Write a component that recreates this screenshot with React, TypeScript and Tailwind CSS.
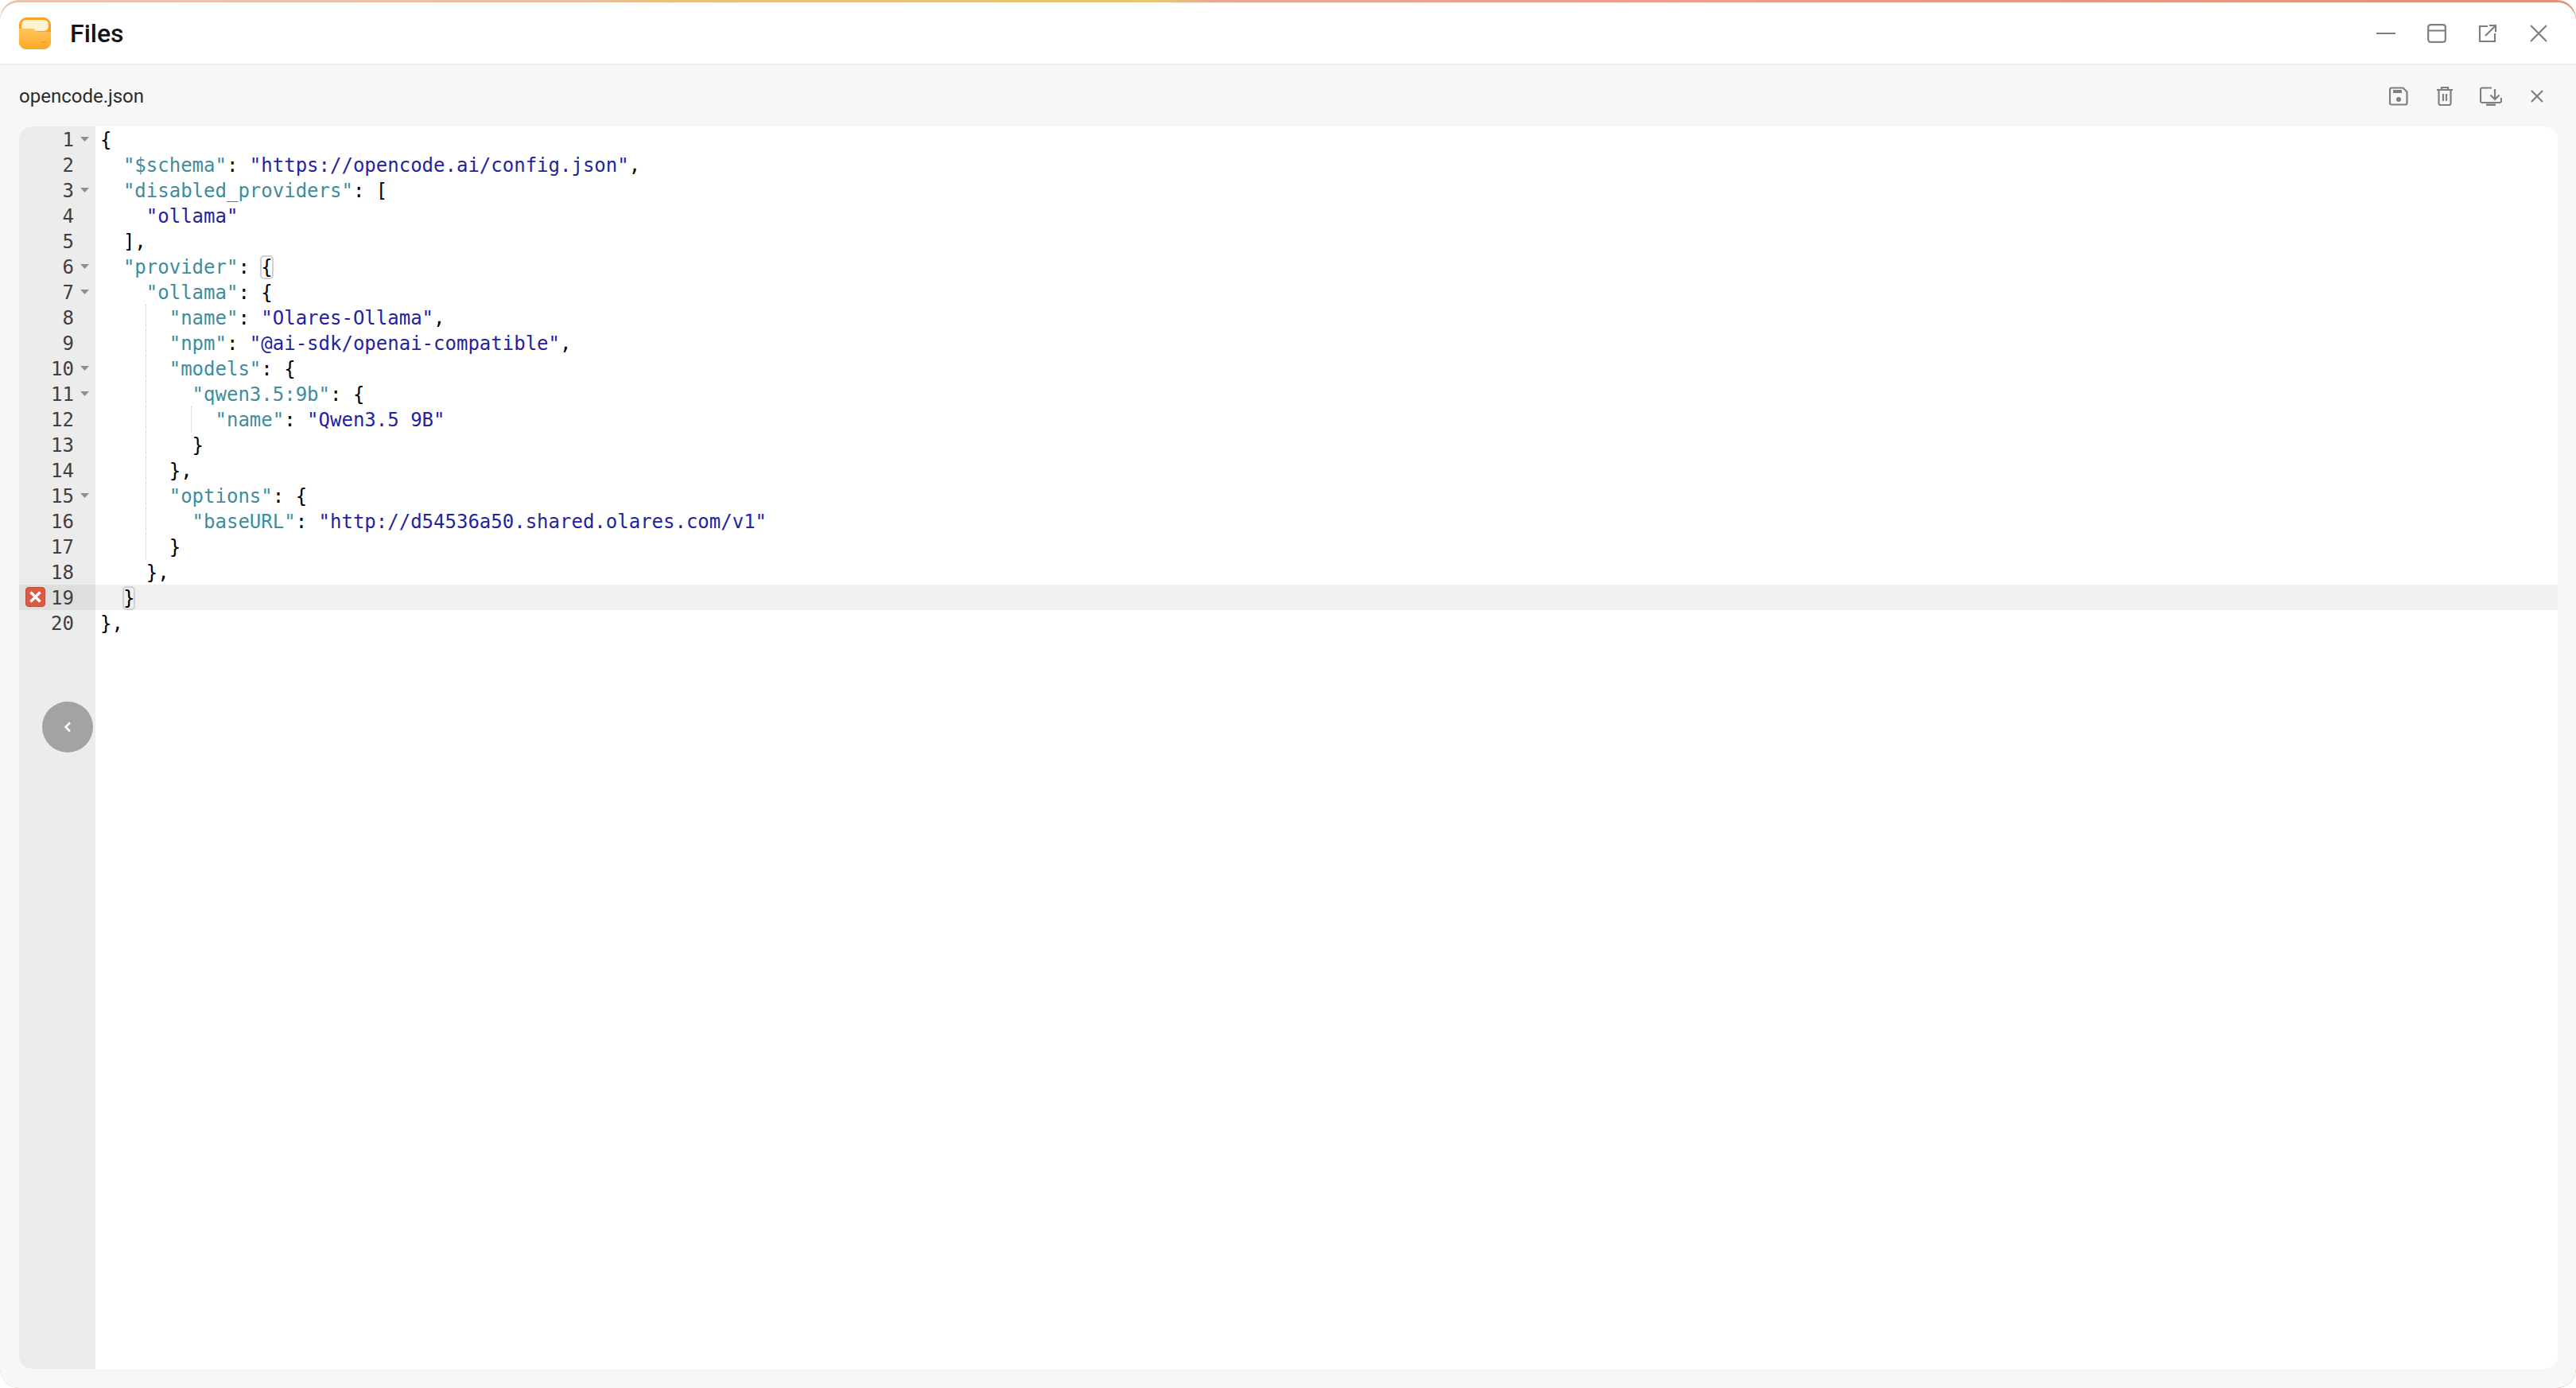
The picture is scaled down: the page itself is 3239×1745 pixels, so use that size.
const source = `{
  "$schema": "https://opencode.ai/config.json",
  "disabled_providers": [
    "ollama"
  ],
  "provider": {
    "ollama": {
      "name": "Olares-Ollama",
      "npm": "@ai-sdk/openai-compatible",
      "models": {
        "qwen3.5:9b": {
          "name": "Qwen3.5 9B"
        }
      },
      "options": {
        "baseURL": "http://d54536a50.shared.olares.com/v1"
      }
    },
  }
},`.split("\n");

const foldable = [1, 3, 6, 7, 10, 11, 15];
const activeLine = 19;

// tiny json highlighter, keys teal and values blue
const Tokens = ({ text }: { text: string }) => {
  const parts = text.split(/("[^"]*")/);
  return (
    <>
      {parts.map((part, i) => {
        if (!part.startsWith('"')) return <span key={i}>{part}</span>;
        const isKey = parts[i + 1]?.startsWith(":");
        return (
          <span key={i} className={isKey ? "text-[#3f8c9c]" : "text-[#23239f]"}>
            {part}
          </span>
        );
      })}
    </>
  );
};

const CodeLine = ({ text, no }: { text: string; no: number }) => {
  const guideOuter = no >= 8 && no <= 17;
  const guideInner = no === 12;
  const bracket = no === 6 ? text.indexOf("{") : no === 19 ? text.indexOf("}") : -1;
  return (
    <div className={`relative h-[32px] pt-[1px] pl-[6px] whitespace-pre ${no === activeLine ? "bg-[#f0f0f0]" : ""}`}>
      {guideOuter && <div className="absolute left-[63px] top-0 h-full border-l border-dotted border-[#c8c8c8]" />}
      {guideInner && <div className="absolute left-[120px] top-0 h-full border-l border-dotted border-[#c8c8c8]" />}
      {bracket >= 0 ? (
        <>
          <Tokens text={text.slice(0, bracket)} />
          <span className="rounded-[4px] outline outline-2 -outline-offset-1 outline-[#cfcfcf]">{text[bracket]}</span>
          <Tokens text={text.slice(bracket + 1)} />
        </>
      ) : (
        <Tokens text={text} />
      )}
    </div>
  );
};

const GutterRow = ({ no }: { no: number }) => (
  <div className={`flex h-[32px] items-center justify-end ${no === activeLine ? "bg-[#dedede]" : ""}`}>
    {no === activeLine && (
      <div className="mr-auto -mt-[2px] ml-[8px] flex h-[25px] w-[25px] items-center justify-center rounded-[4px] border border-[#b5503c] bg-[#dd5a42]">
        <svg width="17" height="17" viewBox="0 0 17 17" fill="none" stroke="#fff" strokeWidth="3.4">
          <path d="M2.5 2.5l12 12M14.5 2.5l-12 12" />
        </svg>
      </div>
    )}
    <span className="pt-[2px]">{no}</span>
    <div className="flex w-[27px] justify-end pr-[8px]">
      {foldable.includes(no) && (
        <svg width="11" height="6" viewBox="0 0 11 6" fill="#8f8f8f">
          <path d="M0 0h11L5.5 6z" />
        </svg>
      )}
    </div>
  </div>
);

const Icon = ({ w = 24, h = 24, children }: { w?: number; h?: number; children: React.ReactNode }) => (
  <svg width={w} height={h} viewBox={`0 0 ${w} ${h}`} fill="none" stroke="#7f7f7f" strokeWidth="2.2">
    {children}
  </svg>
);

const FolderLogo = () => (
  <svg width="40" height="40" viewBox="0 0 40 40">
    <defs>
      <linearGradient id="front" x1="0" y1="0" x2="0" y2="1">
        <stop offset="0" stopColor="#ffc55a" />
        <stop offset="1" stopColor="#ffa826" />
      </linearGradient>
    </defs>
    <rect width="40" height="40" rx="9" fill="#fba31e" />
    <rect x="3" y="3" width="34" height="14" rx="6" fill="#fff1d4" />
    <path d="M0 14h18l5 4h17v13a9 9 0 0 1-9 9H9a9 9 0 0 1-9-9z" fill="url(#front)" />
    <path d="M27 31h7" stroke="#e48f18" strokeWidth="1" />
  </svg>
);

export default function App() {
  return (
    <div className="h-screen overflow-hidden rounded-[24px] bg-[linear-gradient(90deg,#ebc2ae_0%,#e8bfa2_23%,#e6c07a_26%,#e6c67a_45%,#e9a896_47%,#e2917a_100%)] pt-[3px] font-['Roboto',sans-serif]">
      <div className="flex h-full flex-col overflow-hidden rounded-[24px] bg-[#f7f7f7]">
        <header className="flex h-[79px] shrink-0 items-center border-b-2 border-[#ececec] bg-white pr-[35px] pl-[24px]">
          <FolderLogo />
          <h1 className="ml-[24px] text-[32px] font-medium text-[#141414]">Files</h1>
          <div className="ml-auto flex items-center gap-[40px]">
            <Icon>
              <path d="M0 12h24" strokeLinecap="round" />
            </Icon>
            <Icon>
              <rect x="1.2" y="1.2" width="21.6" height="21.6" rx="3" />
              <path d="M1 8.5h22" />
            </Icon>
            <Icon>
              <path d="M12 3H2v19h19V12" />
              <path d="M9 15L22 2M14 2h8v8" />
            </Icon>
            <Icon>
              <path d="M2 2l20 20M22 2L2 22" />
            </Icon>
          </div>
        </header>

        <div className="flex h-[77px] shrink-0 items-center justify-between pr-[35px] pl-[24px]">
          <span className="text-[24px] text-[#2b2b2b]">opencode.json</span>
          <div className="flex items-center gap-[30px]">
            <div className="flex w-[28px] justify-center">
              <Icon>
                <path d="M3 1.500h14.500l5 5V20.500a2 2 0 0 1-2 2H3a2 2 0 0 1-2-2V3.500a2 2 0 0 1 2-2z" />
                <path d="M5 6h11" strokeWidth="4" />
                <circle cx="12" cy="16" r="3" fill="#7f7f7f" stroke="none" />
              </Icon>
            </div>
            <div className="flex w-[28px] justify-center">
              <Icon w={20}>
                <path d="M0 4h20M6 3V1h8v2" />
                <path d="M2.500 4v17a2 2 0 0 0 2 2h11a2 2 0 0 0 2-2V4" />
                <path d="M8 9v9M12 9v9" />
              </Icon>
            </div>
            <div className="flex w-[28px] justify-center">
              <Icon w={28}>
                <path d="M15 1.500H3a2 2 0 0 0-2 2V18a2 2 0 0 0 2 2h22a2 2 0 0 0 2-2v-4" />
                <path d="M19 3v13M13.500 10.500L19 16l5.500-5.500" />
                <path d="M8 23h12" strokeWidth="3" />
              </Icon>
            </div>
            <div className="flex w-[28px] justify-center">
              <Icon w={16} h={16}>
                <path d="M1 1l14 14M15 1L1 15" />
              </Icon>
            </div>
          </div>
        </div>

        <div className="mr-[23px] mb-[24px] ml-[24px] flex min-h-0 flex-1 overflow-hidden rounded-[16px] bg-white font-['DejaVu_Sans_Mono',monospace] text-[24px] leading-[32px] text-black">
          <div className="relative w-[96px] shrink-0 bg-[#ececec] text-[#404040]">
            {source.map((_, i) => (
              <GutterRow key={i} no={i + 1} />
            ))}
            <button className="absolute top-[723px] left-[29px] flex h-[64px] w-[64px] items-center justify-center rounded-full bg-[#a3a3a3]">
              <svg width="10" height="14" viewBox="0 0 10 14" fill="none" stroke="#fff" strokeWidth="2.500">
                <path d="M8 1.500L2.500 7 8 12.500" />
              </svg>
            </button>
          </div>
          <div className="min-w-0 flex-1">
            {source.map((text, i) => (
              <CodeLine key={i} text={text} no={i + 1} />
            ))}
          </div>
        </div>
      </div>
    </div>
  );
}
